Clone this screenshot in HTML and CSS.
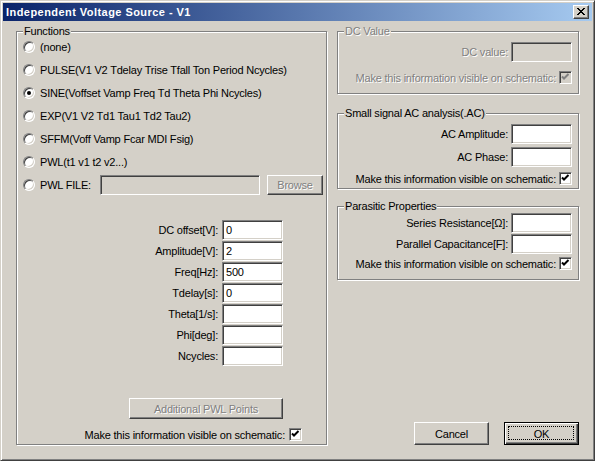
FILE: index.html
```html
<!DOCTYPE html>
<html>
<head>
<meta charset="utf-8">
<title>Independent Voltage Source - V1</title>
<link rel="stylesheet" href="styles.css">
</head>
<body>
<div class="window">
  <div class="titlebar">
    <span class="title">Independent Voltage Source - V1</span>
    <span class="close-btn">
      <svg width="8" height="7" viewBox="0 0 8 7">
        <g fill="#000">
          <rect x="0" y="0" width="2" height="1"/><rect x="6" y="0" width="2" height="1"/>
          <rect x="1" y="1" width="2" height="1"/><rect x="5" y="1" width="2" height="1"/>
          <rect x="2" y="2" width="4" height="1"/>
          <rect x="3" y="3" width="2" height="1"/>
          <rect x="2" y="4" width="4" height="1"/>
          <rect x="1" y="5" width="2" height="1"/><rect x="5" y="5" width="2" height="1"/>
          <rect x="0" y="6" width="2" height="1"/><rect x="6" y="6" width="2" height="1"/>
        </g>
      </svg>
    </span>
  </div>
  <div class="content">
    <div class="group functions">
      <span class="group-title">Functions</span>
      <div class="radio-row"><span class="radio"></span><span>(none)</span></div>
      <div class="radio-row"><span class="radio"></span><span>PULSE(V1 V2 Tdelay Trise Tfall Ton Period Ncycles)</span></div>
      <div class="radio-row"><span class="radio checked"></span><span>SINE(Voffset Vamp Freq Td Theta Phi Ncycles)</span></div>
      <div class="radio-row"><span class="radio"></span><span>EXP(V1 V2 Td1 Tau1 Td2 Tau2)</span></div>
      <div class="radio-row"><span class="radio"></span><span>SFFM(Voff Vamp Fcar MDI Fsig)</span></div>
      <div class="radio-row"><span class="radio"></span><span>PWL(t1 v1 t2 v2...)</span></div>
      <div class="radio-row"><span class="radio"></span><span class="pwl-label">PWL FILE:</span><span class="field disabled pwl-field"></span><span class="btn btn-disabled browse">Browse</span></div>

      <div class="params">
        <span class="param-label">DC offset[V]:</span><span class="field">0</span>
        <span class="param-label">Amplitude[V]:</span><span class="field">2</span>
        <span class="param-label">Freq[Hz]:</span><span class="field">500</span>
        <span class="param-label">Tdelay[s]:</span><span class="field">0</span>
        <span class="param-label">Theta[1/s]:</span><span class="field"></span>
        <span class="param-label">Phi[deg]:</span><span class="field"></span>
        <span class="param-label">Ncycles:</span><span class="field"></span>
      </div>

      <div class="pwl-points-row"><span class="btn btn-disabled pwl-points">Additional PWL Points</span></div>
      <div class="check-row left-check"><span>Make this information visible on schematic:</span><span class="checkbox"><svg width="11" height="11" viewBox="0 0 11 11"><path d="M2 4.5 L4 6.5 L8.5 2" fill="none" stroke="#000" stroke-width="2"/></svg></span></div>
    </div>

    <div class="right-col">
      <div class="group dc-group is-disabled">
        <span class="group-title">DC Value</span>
        <div class="field-row"><span class="row-label">DC value:</span><span class="field disabled"></span></div>
        <div class="check-row dc-check"><span>Make this information visible on schematic:</span><span class="checkbox disabled"><svg width="11" height="11" viewBox="0 0 11 11"><path d="M2 4.5 L4 6.5 L8.5 2" fill="none" stroke="#808080" stroke-width="2"/></svg></span></div>
      </div>

      <div class="group ac-group">
        <span class="group-title">Small signal AC analysis(.AC)</span>
        <div class="field-row"><span class="row-label">AC Amplitude:</span><span class="field"></span></div>
        <div class="field-row ac-second"><span class="row-label">AC Phase:</span><span class="field"></span></div>
        <div class="check-row ac-check"><span>Make this information visible on schematic:</span><span class="checkbox"><svg width="11" height="11" viewBox="0 0 11 11"><path d="M2 4.5 L4 6.5 L8.5 2" fill="none" stroke="#000" stroke-width="2"/></svg></span></div>
      </div>

      <div class="group parasitic-group">
        <span class="group-title">Parasitic Properties</span>
        <div class="field-row"><span class="row-label">Series Resistance[Ω]:</span><span class="field"></span></div>
        <div class="field-row par-second"><span class="row-label">Parallel Capacitance[F]:</span><span class="field"></span></div>
        <div class="check-row par-check"><span>Make this information visible on schematic:</span><span class="checkbox"><svg width="11" height="11" viewBox="0 0 11 11"><path d="M2 4.5 L4 6.5 L8.5 2" fill="none" stroke="#000" stroke-width="2"/></svg></span></div>
      </div>

      <div class="buttons">
        <span class="btn cmd">Cancel</span>
        <span class="btn cmd btn-default">OK</span>
      </div>
    </div>
  </div>
</div>
</body>
</html>
```
FILE: styles.css
```css
html, body {
  margin: 0;
  padding: 0;
  background: #d4d0c8;
}

body {
  font-family: "Liberation Sans", Arial, sans-serif;
  font-size: 11px;
  letter-spacing: -0.2px;
  color: #000;
}

.window {
  width: 595px;
  height: 461px;
  box-sizing: border-box;
  border: 1px solid;
  border-color: #d4d0c8 #404040 #404040 #d4d0c8;
  box-shadow: inset 1px 1px #fff, inset -1px -1px #808080;
  padding: 2px;
  background: #d4d0c8;
  display: flex;
  flex-direction: column;
}

.titlebar {
  height: 18px;
  flex: none;
  background: linear-gradient(to right, #0a246a, #a6caf0);
  display: flex;
  align-items: center;
  justify-content: space-between;
  padding: 0 3px;
}

.title {
  color: #fff;
  font-weight: bold;
  font-size: 11px;
  letter-spacing: 0.45px;
  line-height: 18px;
}

.close-btn {
  width: 16px;
  height: 14px;
  box-sizing: border-box;
  background: #d4d0c8;
  border: 1px solid;
  border-color: #fff #404040 #404040 #fff;
  box-shadow: inset -1px -1px #808080;
  display: flex;
  align-items: center;
  justify-content: center;
  padding: 0 1px 1px 0;
}

.close-btn svg {
  display: block;
}

.content {
  flex: 1;
  display: grid;
  grid-template-columns: 311px 242px;
  column-gap: 10px;
  padding: 10px 0 13px 13px;
}

/* group boxes */
.group {
  position: relative;
  box-sizing: border-box;
  border: 1px solid #808080;
  box-shadow: inset 1px 1px #fff, 1px 1px #fff;
}

.group-title {
  position: absolute;
  top: -7px;
  left: 6px;
  padding: 0 1px;
  line-height: 13px;
  background: #d4d0c8;
  white-space: nowrap;
}

.is-disabled .group-title,
.is-disabled .row-label,
.is-disabled .check-row > span:first-child {
  color: #808080;
  text-shadow: 1px 1px #fff;
}

/* functions */
.functions {
  padding: 3px 0 0 6px;
  display: flex;
  flex-direction: column;
}

.radio-row {
  height: 23px;
  display: flex;
  align-items: center;
  gap: 5px;
  white-space: nowrap;
}

.radio {
  width: 12px;
  height: 12px;
  box-sizing: border-box;
  border-radius: 50%;
  border: 1px solid;
  border-color: #808080 #fff #fff #808080;
  background: #fff;
  box-shadow: inset 1px 1px #404040, inset -1px -1px #d4d0c8;
  position: relative;
  flex: none;
}

.radio.checked::after {
  content: "";
  position: absolute;
  left: 3px;
  top: 3px;
  width: 4px;
  height: 4px;
  border-radius: 50%;
  background: #000;
}

.pwl-label {
  width: 55px;
  flex: none;
}

.field {
  box-sizing: border-box;
  width: 61px;
  height: 20px;
  background: #fff;
  border: 1px solid;
  border-color: #808080 #fff #fff #808080;
  box-shadow: inset 1px 1px #404040, inset -1px -1px #d4d0c8;
  padding: 0 3px;
  line-height: 18px;
  flex: none;
}

.field.disabled {
  background: #d4d0c8;
}

.pwl-field {
  width: 160px;
}

.btn {
  box-sizing: border-box;
  background: #d4d0c8;
  border: 1px solid;
  border-color: #fff #404040 #404040 #fff;
  box-shadow: inset -1px -1px #808080;
  display: flex;
  align-items: center;
  justify-content: center;
  white-space: nowrap;
  flex: none;
}

.btn-disabled {
  color: #808080;
  text-shadow: 1px 1px #fff;
}

.browse {
  width: 56px;
  height: 20px;
  margin-left: 2px;
}

.params {
  margin-top: 24px;
  align-self: flex-end;
  margin-right: 43px;
  display: grid;
  grid-template-columns: auto 61px;
  column-gap: 4px;
  row-gap: 1px;
  grid-auto-rows: 20px;
}

.param-label {
  text-align: right;
  line-height: 20px;
  white-space: nowrap;
}

.pwl-points-row {
  margin-top: 32px;
  display: flex;
  justify-content: flex-end;
  padding-right: 43px;
}

.pwl-points {
  width: 154px;
  height: 21px;
}

.check-row {
  display: flex;
  align-items: center;
  justify-content: flex-end;
  gap: 4px;
  white-space: nowrap;
  height: 13px;
}

.left-check {
  margin-top: 9px;
  padding-right: 24px;
}

.checkbox {
  width: 13px;
  height: 13px;
  box-sizing: border-box;
  border: 1px solid;
  border-color: #808080 #fff #fff #808080;
  box-shadow: inset 1px 1px #404040, inset -1px -1px #d4d0c8;
  background: #fff;
  flex: none;
  display: flex;
  align-items: center;
  justify-content: center;
}

.checkbox svg {
  display: block;
}

.checkbox.disabled {
  background: #d4d0c8;
}

/* right column */
.right-col {
  display: flex;
  flex-direction: column;
}

.field-row {
  display: flex;
  align-items: center;
  justify-content: flex-end;
  gap: 3px;
  padding-right: 6px;
  white-space: nowrap;
}

.check-row.dc-check,
.check-row.ac-check,
.check-row.par-check {
  padding-right: 6px;
  gap: 3px;
}

.dc-group {
  padding: 10px 0 9px;
}

.dc-check {
  margin-top: 9px;
}

.ac-group {
  margin-top: 19px;
  padding: 10px 0 3px;
}

.ac-second {
  margin-top: 3px;
}

.ac-check {
  margin-top: 5px;
}

.parasitic-group {
  margin-top: 17px;
  padding: 6px 0 9px;
}

.par-second {
  margin-top: 1px;
}

.par-check {
  margin-top: 3px;
}

.buttons {
  margin-top: auto;
  display: flex;
  justify-content: flex-end;
  gap: 15px;
}

.cmd {
  width: 75px;
  height: 23px;
}

.btn-default {
  position: relative;
  border: 1px solid #000;
  box-shadow: inset 1px 1px #fff, inset -1px -1px #404040, inset -2px -2px #808080;
}

.btn-default::after {
  content: "";
  position: absolute;
  left: 3px;
  top: 3px;
  right: 4px;
  bottom: 4px;
  border: 1px dotted #000;
}
```
